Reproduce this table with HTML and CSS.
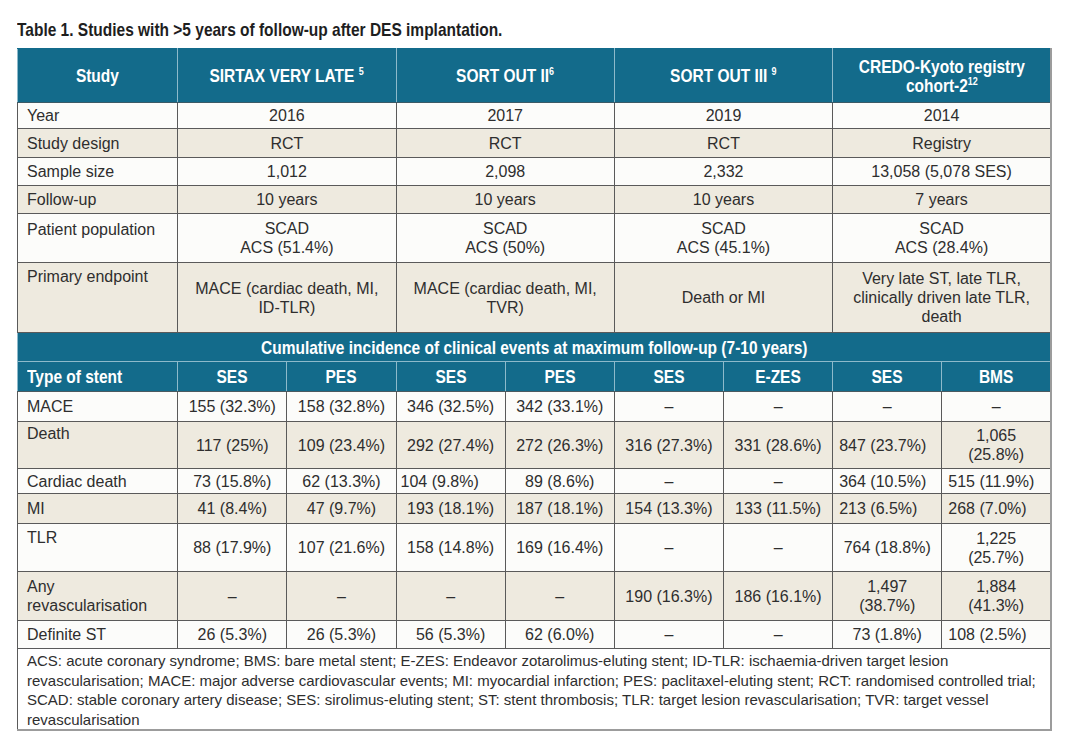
FILE: index.html
```html
<!DOCTYPE html>
<html>
<head>
<meta charset="utf-8">
<link rel="stylesheet" href="styles.css">
</head>
<body>
<div class="page">
  <h1 class="title"><span class="cn cn-left">Table 1. Studies with &gt;5 years of follow-up after DES implantation.</span></h1>
  <table class="tbl">
    <colgroup>
      <col class="c-label">
      <col class="c-sub"><col class="c-sub"><col class="c-sub"><col class="c-sub">
      <col class="c-sub"><col class="c-sub"><col class="c-sub"><col class="c-sub">
    </colgroup>
    <tbody>
      <tr class="r-head">
        <th><span class="cn">Study</span></th>
        <th colspan="2"><span class="cn">SIRTAX VERY LATE <sup>5</sup></span></th>
        <th colspan="2"><span class="cn">SORT OUT II<sup>6</sup></span></th>
        <th colspan="2"><span class="cn">SORT OUT III <sup>9</sup></span></th>
        <th colspan="2"><span class="cn">CREDO-Kyoto registry<br>cohort-2<sup>12</sup></span></th>
      </tr>
      <tr class="w h-26">
        <td class="lab">Year</td>
        <td colspan="2">2016</td><td colspan="2">2017</td><td colspan="2">2019</td><td colspan="2">2014</td>
      </tr>
      <tr class="b h-29">
        <td class="lab">Study design</td>
        <td colspan="2">RCT</td><td colspan="2">RCT</td><td colspan="2">RCT</td><td colspan="2">Registry</td>
      </tr>
      <tr class="w h-28">
        <td class="lab">Sample size</td>
        <td colspan="2">1,012</td><td colspan="2">2,098</td><td colspan="2">2,332</td><td colspan="2">13,058 (5,078 SES)</td>
      </tr>
      <tr class="b h-28">
        <td class="lab">Follow-up</td>
        <td colspan="2">10 years</td><td colspan="2">10 years</td><td colspan="2">10 years</td><td colspan="2">7 years</td>
      </tr>
      <tr class="w h-49">
        <td class="lab top top-6">Patient population</td>
        <td colspan="2">SCAD<br>ACS (51.4%)</td><td colspan="2">SCAD<br>ACS (50%)</td><td colspan="2">SCAD<br>ACS (45.1%)</td><td colspan="2">SCAD<br>ACS (28.4%)</td>
      </tr>
      <tr class="b h-70">
        <td class="lab top">Primary endpoint</td>
        <td colspan="2">MACE (cardiac death, MI, ID-TLR)</td>
        <td colspan="2">MACE (cardiac death, MI, TVR)</td>
        <td colspan="2">Death or MI</td>
        <td colspan="2">Very late ST, late TLR, clinically driven late TLR, death</td>
      </tr>
      <tr class="r-sect">
        <th colspan="9"><span class="cn">Cumulative incidence of clinical events at maximum follow-up (7-10 years)</span></th>
      </tr>
      <tr class="r-type">
        <th class="lab-h"><span class="cn cn-left">Type of stent</span></th>
        <th><span class="cn">SES</span></th><th><span class="cn">PES</span></th><th><span class="cn">SES</span></th><th><span class="cn">PES</span></th>
        <th><span class="cn">SES</span></th><th><span class="cn">E-ZES</span></th><th><span class="cn">SES</span></th><th><span class="cn">BMS</span></th>
      </tr>
      <tr class="w h-30">
        <td class="lab">MACE</td>
        <td>155 (32.3%)</td><td>158 (32.8%)</td><td>346 (32.5%)</td><td>342 (33.1%)</td><td>–</td><td>–</td><td>–</td><td>–</td>
      </tr>
      <tr class="b h-47">
        <td class="lab top top-2">Death</td>
        <td>117 (25%)</td><td>109 (23.4%)</td><td>292 (27.4%)</td><td>272 (26.3%)</td><td>316 (27.3%)</td><td>331 (28.6%)</td><td class="tl">847 (23.7%)</td><td>1,065 (25.8%)</td>
      </tr>
      <tr class="w h-25">
        <td class="lab">Cardiac death</td>
        <td>73 (15.8%)</td><td>62 (13.3%)</td><td class="tl tl-4">104 (9.8%)</td><td>89 (8.6%)</td><td>–</td><td>–</td><td class="tl">364 (10.5%)</td><td class="tl">515 (11.9%)</td>
      </tr>
      <tr class="b h-30">
        <td class="lab">MI</td>
        <td>41 (8.4%)</td><td>47 (9.7%)</td><td>193 (18.1%)</td><td>187 (18.1%)</td><td>154 (13.3%)</td><td>133 (11.5%)</td><td class="tl">213 (6.5%)</td><td class="tl">268 (7.0%)</td>
      </tr>
      <tr class="w h-48">
        <td class="lab top">TLR</td>
        <td>88 (17.9%)</td><td>107 (21.6%)</td><td>158 (14.8%)</td><td>169 (16.4%)</td><td>–</td><td>–</td><td>764 (18.8%)</td><td>1,225 (25.7%)</td>
      </tr>
      <tr class="b h-49">
        <td class="lab">Any revascularisation</td>
        <td>–</td><td>–</td><td>–</td><td>–</td><td>190 (16.3%)</td><td>186 (16.1%)</td><td>1,497 (38.7%)</td><td>1,884 (41.3%)</td>
      </tr>
      <tr class="w h-28">
        <td class="lab">Definite ST</td>
        <td>26 (5.3%)</td><td>26 (5.3%)</td><td>56 (5.3%)</td><td>62 (6.0%)</td><td>–</td><td>–</td><td>73 (1.8%)</td><td class="tl">108 (2.5%)</td>
      </tr>
      <tr class="w">
        <td class="foot" colspan="9">ACS: acute coronary syndrome; BMS: bare metal stent; E-ZES: Endeavor zotarolimus-eluting stent; ID-TLR: ischaemia-driven target lesion<br>revascularisation; MACE: major adverse cardiovascular events; MI: myocardial infarction; PES: paclitaxel-eluting stent; RCT: randomised controlled trial;<br>SCAD: stable coronary artery disease; SES: sirolimus-eluting stent; ST: stent thrombosis; TLR: target lesion revascularisation; TVR: target vessel<br>revascularisation</td>
      </tr>
    </tbody>
  </table>
</div>
</body>
</html>
```

FILE: styles.css
```css
html, body {
  margin: 0;
  padding: 0;
  background: #ffffff;
}

.page {
  padding: 19px 0 0 17px;
  font-family: "Liberation Sans", Arial, sans-serif;
  color: #2e2e2e;
}

/* narrow bold display face: Liberation Sans Bold squeezed horizontally */
.cn {
  display: inline-block;
  transform: scaleX(0.815);
  transform-origin: 50% 50%;
  white-space: nowrap;
}
.cn-left {
  transform-origin: 0 50%;
}

.title {
  margin: 0 0 7px 0;
  font-weight: bold;
  font-size: 19px;
  line-height: 22px;
  color: #1e1e1e;
  white-space: nowrap;
}

.tbl {
  width: 1035px;
  table-layout: fixed;
  border-collapse: collapse;
  border-left: 1px solid #5e5e5e;
  border-right: 2px solid #9c9c9c;
  border-bottom: 2px solid #9c9c9c;
  font-size: 16px;
  line-height: 19px;
}

.c-label { width: 160px; }
.c-sub { width: 109px; }

.tbl td {
  border: 1px solid #5a5a5a;
  padding: 0 5px;
  text-align: center;
  vertical-align: middle;
}

.tbl th {
  background: #136b8b;
  color: #ffffff;
  font-weight: bold;
  font-size: 19px;
  line-height: 19px;
  text-align: center;
  vertical-align: middle;
  border: 1px solid #8dbacb;
  padding: 0 2px;
  overflow: visible;
}

.tbl th sup {
  font-size: 11px;
  line-height: 0;
  vertical-align: 7px;
}

.r-head { height: 54px; }
.r-head th { border-top-color: #136b8b; border-bottom-color: #3b5a66; }

.r-sect { height: 29px; }
.r-sect th { border-top-color: #4a4a4a; }
.r-type { height: 30px; }
.r-type th { border-bottom-color: #4a5a60; }

.tbl .lab-h { text-align: left; padding-left: 9px; }

.w td { background: #fcfcfa; }
.b td { background: #eeeadf; }

.tbl .lab {
  text-align: left;
  padding-left: 9px;
}
.tbl .top {
  vertical-align: top;
  padding-top: 4px;
}
.tbl .top-6 { padding-top: 6px; }
.tbl .top-2 { padding-top: 2px; }
.tbl .tl {
  text-align: left;
  padding-left: 6px;
}
.tbl .tl-4 { padding-left: 4px; }

.h-25 { height: 25px; }
.h-26 { height: 26px; }
.h-28 { height: 28px; }
.h-29 { height: 29px; }
.h-30 { height: 30px; }
.h-47 { height: 47px; }
.h-48 { height: 48px; }
.h-49 { height: 49px; }
.h-70 { height: 70px; }

.tbl .foot {
  text-align: left;
  font-size: 15px;
  line-height: 19.5px;
  padding: 2px 0 0 9px;
  height: 76px;
  vertical-align: top;
  white-space: nowrap;
  background: #ffffff;
}
```
